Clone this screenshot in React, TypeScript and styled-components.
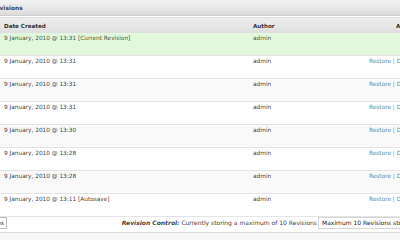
import React from "react";
import styled, { createGlobalStyle } from "styled-components";

const Global = createGlobalStyle`
  html, body { margin: 0; padding: 0; background: #f7f7f7; overflow: hidden; }
  body { width: 400px; height: 240px; font-family: "DejaVu Sans", Verdana, sans-serif; }
`;

const Box = styled.div`
  margin-left: -14px;
  width: 440px;
  background: #fff;
`;

const TitleBar = styled.div`
  height: 15px;
  display: flex;
  align-items: center;
  padding-left: 5px;
  font-size: 5.9px;
  font-weight: bold;
  color: #464646;
  background: linear-gradient(#f3f3f3, #dcdcdc);
  border-bottom: 1px solid #d0d0d0;
`;

const Inner = styled.div`
  padding-top: 1px;
  background: #fff;
`;

const Row = styled.div<{ $bg: string }>`
  display: flex;
  height: 23px;
  padding-top: 2px;
  box-sizing: border-box;
  border-bottom: 1px solid #e4e4e4;
  background: ${(p) => p.$bg};
  font-size: 5.8px;
  color: #444;
  line-height: 7px;
  white-space: nowrap;
`;

const HeadRow = styled.div`
  display: flex;
  align-items: center;
  height: 15px;
  background: linear-gradient(#eeeeee, #dfdfdf);
  border-top: 1px solid #e0e0e0;
  font-size: 5.6px;
  font-weight: bold;
  color: #333;
  white-space: nowrap;
`;

const DateCell = styled.div<{ $current?: boolean }>`
  width: 249px;
  padding-left: 18px;
  flex: none;
  color: ${(p) => (p.$current ? "#4a5a3c" : "inherit")};
`;

const AuthorCell = styled.div<{ $current?: boolean }>`
  width: 116px;
  flex: none;
  color: ${(p) => (p.$current ? "#4a5a3c" : "inherit")};
`;

const ActionCell = styled.div`
  flex: 1;
  color: #5b8ea5;
`;

const ActionHead = styled.div`
  flex: 1;
  padding-left: 27px;
`;

const Sep = styled.span`
  color: #888;
`;

const Footer = styled.div`
  display: flex;
  align-items: flex-start;
  height: 16px;
  box-sizing: border-box;
  border-bottom: 1px solid #dcdcdc;
  font-size: 6px;
  color: #444;
  white-space: nowrap;
`;

const Button = styled.div`
  width: 21px;
  height: 12px;
  box-sizing: border-box;
  border: 1px solid #bbb;
  background: #fff;
  font-size: 5.6px;
  line-height: 10px;
  text-align: right;
  padding-right: 2px;
  color: #333;
  flex: none;
`;

const Info = styled.div`
  flex: 1;
  text-align: right;
  padding-right: 1px;
  line-height: 12px;
`;

const Strong = styled.span`
  font-weight: bold;
  font-style: italic;
`;

const Select = styled.div`
  width: 108px;
  height: 12px;
  box-sizing: border-box;
  border: 1px solid #d4d4d4;
  background: #fff;
  padding-left: 3px;
  line-height: 10px;
  color: #222;
  flex: none;
`;

const rows = [
  { d: "9 January, 2010 @ 13:31 [Current Revision]", current: true },
  { d: "9 January, 2010 @ 13:31" },
  { d: "9 January, 2010 @ 13:31" },
  { d: "9 January, 2010 @ 13:31" },
  { d: "9 January, 2010 @ 13:30" },
  { d: "9 January, 2010 @ 13:28" },
  { d: "9 January, 2010 @ 13:28" },
  { d: "9 January, 2010 @ 13:11 [Autosave]" },
];

export default function App() {
  return (
    <>
      <Global />
      <Box>
        <TitleBar>Revisions</TitleBar>
        <Inner>
          <HeadRow>
            <DateCell>Date Created</DateCell>
            <AuthorCell>Author</AuthorCell>
            <ActionHead>Actions</ActionHead>
          </HeadRow>
          {rows.map((r, i) => (
            <Row
              key={i}
              $bg={r.current ? "#e3f7dd" : i % 2 === 0 ? "#f9f9f9" : "#fff"}
            >
              <DateCell $current={r.current}>{r.d}</DateCell>
              <AuthorCell $current={r.current}>admin</AuthorCell>
              <ActionCell>
                {r.current ? null : (
                  <>
                    Restore <Sep>|</Sep> Delete
                  </>
                )}
              </ActionCell>
            </Row>
          ))}
          <Footer>
            <Button>es</Button>
            <Info>
              <Strong>Revision Control:</Strong> Currently storing a maximum of 10 Revisions
            </Info>
            <Select>Maximum 10 Revisions stored</Select>
          </Footer>
        </Inner>
      </Box>
    </>
  );
}
